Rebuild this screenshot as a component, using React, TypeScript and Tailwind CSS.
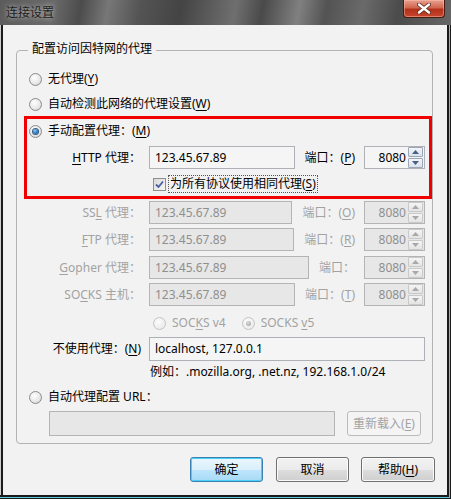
import React from "react";

const U = ({ children }: { children: React.ReactNode }) => (
  <span className="underline underline-offset-[2px] decoration-[1px]">{children}</span>
);

function Radio({ checked = false, disabled = false }: { checked?: boolean; disabled?: boolean }) {
  return (
    <span
      className={`relative w-[13px] h-[13px] shrink-0 rounded-full border flex items-center justify-center ${
        disabled
          ? "border-[#c4c4c4] bg-[radial-gradient(circle_at_40%_35%,#fbfbfb_0%,#ececec_70%,#e0e0e0_100%)]"
          : "border-[#8b8b8b] bg-[radial-gradient(circle_at_40%_35%,#ffffff_0%,#e6e6e6_60%,#c9c9c9_100%)]"
      }`}
    >
      {checked && (
        <span
          className={`w-[5px] h-[5px] rounded-full ${
            disabled
              ? "bg-[radial-gradient(circle_at_40%_35%,#dcdcdc,#9c9c9c)]"
              : "bg-[radial-gradient(circle_at_40%_35%,#8fd1ff_0%,#2a7fc8_50%,#0e3f77_100%)] shadow-[0_0_0_1px_#3a5c80]"
          }`}
        />
      )}
    </span>
  );
}

function Checkbox() {
  return (
    <span className="w-[13px] h-[13px] shrink-0 border border-[#8e8f8f] bg-[linear-gradient(135deg,#d9d9d9,#f6f6f6)] flex items-center justify-center">
      <svg width="9" height="9" viewBox="0 0 9 9">
        <path d="M1 4.5 L3.5 7 L8 1.5" fill="none" stroke="#4a5fa0" strokeWidth="1.8" />
      </svg>
    </span>
  );
}

function Field({ value, disabled = false, className = "" }: { value: string; disabled?: boolean; className?: string }) {
  return (
    <div
      className={`h-[23px] border flex items-center pl-[5px] whitespace-nowrap overflow-hidden ${
        disabled ? "bg-[#e7e7e7] border-[#b4b4b4] text-[#8f8f8f]" : "bg-[#f5f5f5] border-[#aeb1b6] text-black"
      } ${className}`}
    >
      {value}
    </div>
  );
}

function Spinner({ disabled = false }: { disabled?: boolean }) {
  const btn = disabled
    ? "border-[#c9c9c9] bg-[linear-gradient(#f4f4f4,#e4e4e4)]"
    : "border-[#9aa6b6] bg-[linear-gradient(#f2f5f9,#d9e2ec)]";
  const tri = disabled ? "#a8a8a8" : "#4a5d82";
  return (
    <div className="flex flex-col w-[15px] h-[21px] mr-[1px] gap-[1px]">
      <div className={`flex-1 border rounded-[1px] flex items-center justify-center ${btn}`}>
        <svg width="7" height="4" viewBox="0 0 7 4">
          <path d="M0 4 L3.5 0 L7 4 Z" fill={tri} />
        </svg>
      </div>
      <div className={`flex-1 border rounded-[1px] flex items-center justify-center ${btn}`}>
        <svg width="7" height="4" viewBox="0 0 7 4">
          <path d="M0 0 L3.5 4 L7 0 Z" fill={tri} />
        </svg>
      </div>
    </div>
  );
}

function PortBox({ disabled = false }: { disabled?: boolean }) {
  return (
    <div
      className={`w-[61px] h-[23px] shrink-0 border flex items-center ${
        disabled ? "bg-[#e7e7e7] border-[#b4b4b4] text-[#8f8f8f]" : "bg-[#f5f5f5] border-[#aeb1b6] text-black"
      }`}
    >
      <span className="flex-1 text-right pr-[2px]">8080</span>
      <Spinner disabled={disabled} />
    </div>
  );
}

function ProxyRow({
  label,
  port,
  disabled = false,
  className = "",
}: {
  label: React.ReactNode;
  port: React.ReactNode;
  disabled?: boolean;
  className?: string;
}) {
  const tc = disabled ? "text-[#a2a2a2]" : "text-black";
  return (
    <div className={`flex items-center h-[23px] ${className}`}>
      <div className={`w-[114px] shrink-0 text-right whitespace-nowrap ${tc}`}>{label}</div>
      <Field value="123.45.67.89" disabled={disabled} className="ml-[8px] flex-1" />
      <div className={`ml-[10px] shrink-0 whitespace-nowrap ${tc}`}>{port}</div>
      <div className="ml-[9px]">
        <PortBox disabled={disabled} />
      </div>
    </div>
  );
}

function Button({ children, primary = false, disabled = false, className = "" }: { children: React.ReactNode; primary?: boolean; disabled?: boolean; className?: string }) {
  let cls = "";
  if (disabled) cls = "border-[#b8bcbf] bg-[#f4f4f4] text-[#a3a3a3]";
  else if (primary)
    cls =
      "border-[#3c7fb1] text-black bg-[linear-gradient(#eaf6fd_0%,#d9f0fc_50%,#bee6fd_51%,#a7d9f5_100%)] shadow-[inset_0_0_0_1px_#48d0f8]";
  else
    cls =
      "border-[#707070] text-black bg-[linear-gradient(#f2f2f2_0%,#ebebeb_50%,#dddddd_51%,#cfcfcf_100%)] shadow-[inset_0_0_0_1px_#fbfbfb]";
  return (
    <div className={`h-[25px] border rounded-[3px] flex items-center justify-center whitespace-nowrap ${cls} ${className}`}>
      {children}
    </div>
  );
}

export default function App() {
  return (
    <div className="w-[451px] h-[499px] overflow-hidden bg-[#1b1b1b] text-[12px] leading-[16px] font-['Noto_Sans','Noto_Sans_CJK_SC',sans-serif]">
      {/* Title bar */}
      <div className="h-[25px] flex items-start bg-[linear-gradient(100deg,#5c5c5c_0%,#6a6a6a_12%,#4c4c4c_18%,#777777_24%,#545454_31%,#444444_40%,#6f6f6f_52%,#4a4a4a_58%,#808080_66%,#535353_72%,#6a6a6a_80%,#4b4b4b_88%,#666666_100%)]">
        <div className="pl-[6px] pt-[5px] text-[#1e1e1e] [text-shadow:0_0_5px_rgba(255,255,255,0.75)]">连接设置</div>
        <div className="ml-auto mr-[6px] w-[42px] h-[18px] rounded-b-[4px] border border-t-0 border-[#4a1a12] bg-[linear-gradient(#e9a08f_0%,#d0674f_45%,#b3301a_55%,#c8462c_100%)] shadow-[inset_0_0_0_1px_rgba(255,200,180,0.45)] flex items-center justify-center">
          <svg width="14" height="11" viewBox="0 0 14 11">
            <path d="M2 1.5 L12 9.5 M12 1.5 L2 9.5" stroke="#5a2a20" strokeWidth="4" strokeLinecap="round" />
            <path d="M2 1.5 L12 9.5 M12 1.5 L2 9.5" stroke="#ffffff" strokeWidth="2.4" strokeLinecap="round" />
          </svg>
        </div>
      </div>

      {/* Frame below title */}
      <div className="w-[450px] h-[473px] border-r border-b border-[#5cc9da] flex">
        <div className="w-[1px] h-[470px] bg-[#cfcfcf]" />
        <div className="w-[2px]" />
        {/* Window body */}
        <div className="w-[444px] h-[470px] bg-[#f2f2f2] flex flex-col">
          {/* Group box */}
          <div className="relative ml-[13px] mt-[25px] w-[417px] border border-[#b3b3b3] rounded-[4px] flex flex-col">
            <div className="absolute left-[11px] top-[-10px] px-[4px] bg-[#f2f2f2] text-black">配置访问因特网的代理</div>

            <div className="flex items-center h-[18px] mt-[19px] ml-[12px]">
              <Radio />
              <span className="ml-[6px]">无代理(<U>Y</U>)</span>
            </div>
            <div className="flex items-center h-[18px] mt-[7px] ml-[12px]">
              <Radio />
              <span className="ml-[6px]">自动检测此网络的代理设置(<U>W</U>)</span>
            </div>

            {/* Manual (red highlight) */}
            <div className="mt-[3px] ml-[7px] border-[3px] border-[#f00000] pt-[3px] pb-[3px] pr-[4px] flex flex-col">
              <div className="flex items-center h-[18px] ml-[2px]">
                <Radio checked />
                <span className="ml-[6px]">手动配置代理：(<U>M</U>)</span>
              </div>
              <ProxyRow
                className="mt-[6px]"
                label={
                  <>
                    <U>H</U>TTP 代理：
                  </>
                }
                port={
                  <>
                    端口：(<U>P</U>)
                  </>
                }
              />
              <div className="flex items-center h-[18px] mt-[6px] ml-[126px]">
                <Checkbox />
                <span className="ml-[2px] h-[18px] px-[1px] border border-dotted border-[#555] flex items-center">
                  为所有协议使用相同代理(<U>S</U>)
                </span>
              </div>
            </div>

            <div className="ml-[10px] mr-[7px] flex flex-col">
              <ProxyRow
                disabled
                className="mt-[2px]"
                label={
                  <>
                    SS<U>L</U> 代理：
                  </>
                }
                port={
                  <>
                    端口：(<U>O</U>)
                  </>
                }
              />
              <ProxyRow
                disabled
                className="mt-[4px]"
                label={
                  <>
                    <U>F</U>TP 代理：
                  </>
                }
                port={
                  <>
                    端口：(<U>R</U>)
                  </>
                }
              />
              <ProxyRow
                disabled
                className="mt-[5px]"
                label={
                  <>
                    <U>G</U>opher 代理：
                  </>
                }
                port={<>端口：</>}
              />
              <ProxyRow
                disabled
                className="mt-[4px]"
                label={
                  <>
                    SO<U>C</U>KS 主机：
                  </>
                }
                port={
                  <>
                    端口：(<U>T</U>)
                  </>
                }
              />

              <div className="flex items-center h-[16px] mt-[9px] ml-[126px] text-[#a2a2a2]">
                <Radio disabled />
                <span className="ml-[6px]">
                  SOC<U>K</U>S v4
                </span>
                <span className="ml-[16px] flex items-center">
                  <Radio disabled checked />
                </span>
                <span className="ml-[6px]">
                  SOCKS <U>v</U>5
                </span>
              </div>

              <div className="flex items-center h-[24px] mt-[6px]">
                <div className="w-[114px] shrink-0 text-right whitespace-nowrap">
                  不使用代理：(<U>N</U>)
                </div>
                <Field value="localhost, 127.0.0.1" className="ml-[8px] flex-1 h-[24px]" />
              </div>
              <div className="mt-[3px] ml-[123px] h-[16px] whitespace-nowrap">例如：.mozilla.org, .net.nz, 192.168.1.0/24</div>

              <div className="flex items-center h-[18px] mt-[8px] ml-[2px]">
                <Radio />
                <span className="ml-[6px]">自动代理配置 URL：</span>
              </div>
              <div className="flex items-center mt-[5px] mb-[7px]">
                <div className="ml-[22px] w-[286px] h-[25px] border border-[#b4b4b4] bg-[#e7e7e7]" />
                <Button disabled className="ml-[12px] w-[74px]">
                  重新载入(<U>E</U>)
                </Button>
              </div>
            </div>
          </div>

          {/* Dialog buttons */}
          <div className="flex justify-end mt-[13px] mr-[12px]">
            <Button primary className="w-[73px]">
              确定
            </Button>
            <Button className="w-[73px] ml-[13px]">取消</Button>
            <Button className="w-[74px] ml-[12px]">
              帮助(<U>H</U>)
            </Button>
          </div>
        </div>
      </div>
    </div>
  );
}
